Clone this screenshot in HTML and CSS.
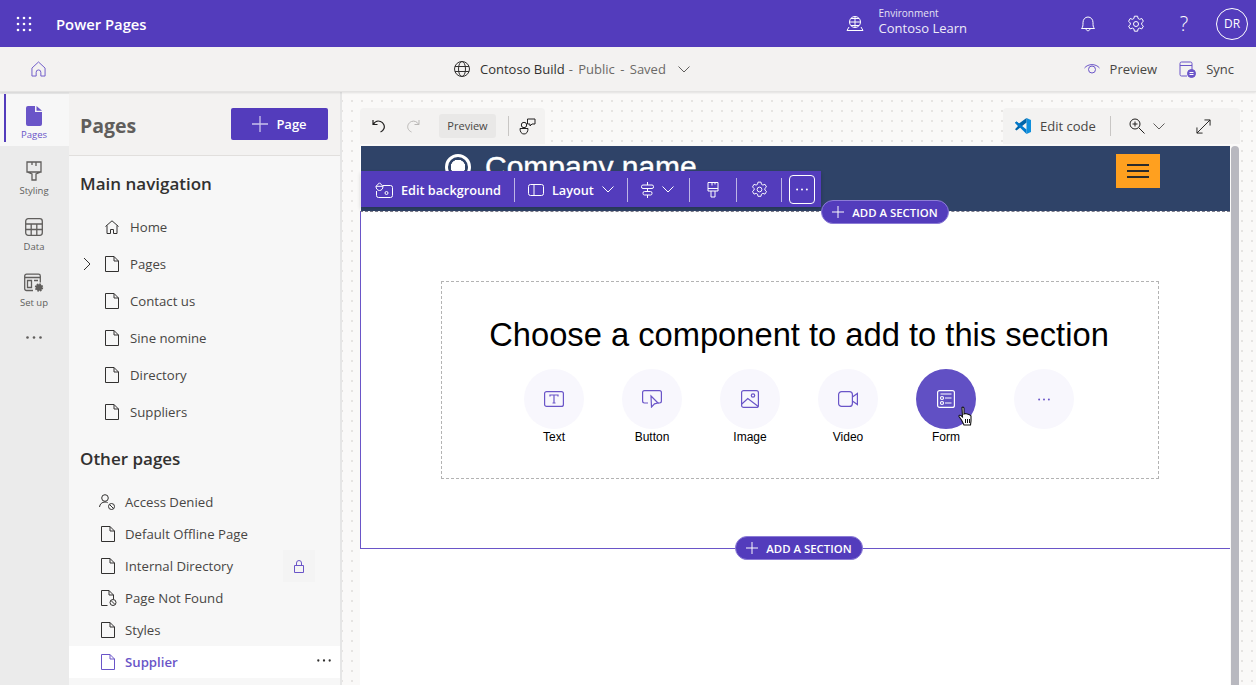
FILE: index.html
```html
<!DOCTYPE html>
<html lang="en">
<head>
    <meta charset="UTF-8">
    <title>Power Pages</title>
    <link rel="stylesheet" href="styles.css">
</head>
<body>
    <svg class="sprite" width="0" height="0">
        <symbol id="file" viewBox="0 0 14 16"><path d="M.5.5h8.500l4.500 4.500v10.500H.5zM9 .5V5h4.500" fill="none" stroke="currentColor"/></symbol>
        <symbol id="gear" viewBox="0 0 18 18"><path d="M7.400 1.200h3.200l.5 2.300 1.500.8 2.200-.8 1.600 2.800-1.700 1.500v1.800l1.700 1.500-1.600 2.800-2.200-.8-1.500.8-.5 2.300H7.400l-.5-2.300-1.500-.8-2.200.8-1.600-2.800 1.700-1.500V8L1.600 6.300l1.600-2.800 2.200.8 1.500-.8z" fill="none" stroke="currentColor"/><circle cx="9" cy="9" r="2.500" fill="none" stroke="currentColor"/></symbol>
        <symbol id="plus" viewBox="0 0 16 16"><path d="M8 0v16M0 8h16" fill="none" stroke="currentColor" stroke-width="1.300"/></symbol>
        <symbol id="chev" viewBox="0 0 12 7"><path d="M.5.5 6 6 11.500.5" fill="none" stroke="currentColor"/></symbol>
        <symbol id="dots" viewBox="0 0 16 3"><circle cx="1.500" cy="1.500" r="1.300" fill="currentColor"/><circle cx="8" cy="1.500" r="1.300" fill="currentColor"/><circle cx="14.500" cy="1.500" r="1.300" fill="currentColor"/></symbol>
    </svg>

    <header class="topbar">
        <svg class="waffle" width="16" height="16" viewBox="0 0 16 16" fill="#fff">
            <circle cx="2" cy="2" r="1.300"/><circle cx="8" cy="2" r="1.300"/><circle cx="14" cy="2" r="1.300"/>
            <circle cx="2" cy="8" r="1.300"/><circle cx="8" cy="8" r="1.300"/><circle cx="14" cy="8" r="1.300"/>
            <circle cx="2" cy="14" r="1.300"/><circle cx="8" cy="14" r="1.300"/><circle cx="14" cy="14" r="1.300"/>
        </svg>
        <span class="brand">Power Pages</span>
        <div class="env">
            <svg width="18" height="18" viewBox="0 0 18 18" fill="none" stroke="#fff">
                <circle cx="9" cy="7" r="5.500"/><path d="M3.500 7h11M9 1.500v11M5 3.500h8M5 10.500h8M3 12l-2 3.500h16L15 12"/>
            </svg>
            <div class="env-text">
                <span class="env-label">Environment</span>
                <span class="env-name">Contoso Learn</span>
            </div>
        </div>
        <div class="top-icons">
            <span class="top-slot"><svg width="16" height="18" viewBox="0 0 16 18" fill="none" stroke="#fff"><path d="M1.500 13.500c1.500-1.500 1.500-3 1.500-6 0-3 2-5.500 5-5.500s5 2.500 5 5.500c0 3 0 4.500 1.500 6zM6 13.500c0 3 4 3 4 0"/></svg></span>
            <span class="top-slot"><svg width="18" height="18"><use href="#gear"/></svg></span>
            <span class="top-slot help">?</span>
            <span class="top-slot"><span class="avatar">DR</span></span>
        </div>
    </header>

    <div class="subbar">
        <svg class="home-link" width="15" height="16" viewBox="0 0 16 17" fill="none" stroke="currentColor"><path d="M1 7.500 8 1l7 6.500V16h-4.500v-4a2.500 2.500 0 0 0-5 0v4H1z"/></svg>
        <div class="site-info">
            <svg width="16" height="16" viewBox="0 0 16 16" fill="none" stroke="#323130"><circle cx="8" cy="8" r="7.500"/><ellipse cx="8" cy="8" rx="3.500" ry="7.500"/><path d="M1 5.500h14M1 10.500h14"/></svg>
            <span class="site-name">Contoso Build</span>
            <span class="site-status">- Public - Saved</span>
            <svg class="site-chev" width="12" height="7"><use href="#chev"/></svg>
        </div>
        <div class="sub-actions">
            <span class="sub-action">
                <svg width="16" height="12" viewBox="0 0 16 12" fill="none" stroke="#6a55c8"><path d="M.5 5C4 .5 12 .5 15.500 5"/><circle cx="8" cy="6.500" r="3.500"/></svg>
                Preview
            </span>
            <span class="sub-action">
                <svg width="17" height="17" viewBox="0 0 17 17" fill="none" stroke="#6a55c8"><path d="M8 15H2.500A1.500 1.500 0 0 1 1 13.500v-11A1.500 1.500 0 0 1 2.500 1h9A1.500 1.500 0 0 1 13 2.500V9M1 4.500h12"/><circle cx="12.500" cy="12.500" r="4" fill="#6a55c8"/><path d="M10.500 11.500h4M10.500 13.500h4" stroke="#fff"/></svg>
                Sync
            </span>
        </div>
    </div>

    <div class="workspace">
        <nav class="rail">
            <a class="rail-item active">
                <svg width="16" height="20" viewBox="0 0 16 20"><path d="M2 0h7v6h7v12a2 2 0 0 1-2 2H2a2 2 0 0 1-2-2V2a2 2 0 0 1 2-2z" fill="#6a55c8"/><path d="M10.500 0 16 4.800h-5.500z" fill="#6a55c8"/></svg>
                Pages
            </a>
            <a class="rail-item">
                <svg width="16" height="20" viewBox="0 0 16 20" fill="none" stroke="#605e5c" stroke-width="1.300"><path d="M1 1h14v10H1zM6 1v3M10 1v4M1 11l5 2v6h4v-6l5-2"/></svg>
                Styling
            </a>
            <a class="rail-item">
                <svg width="18" height="18" viewBox="0 0 18 18" fill="none" stroke="#605e5c" stroke-width="1.300"><rect x=".7" y=".7" width="16.600" height="16.600" rx="2.500"/><path d="M.7 6h16.600M.7 11.500h16.600M6.200 6v11.300M11.800 6v11.300"/></svg>
                Data
            </a>
            <a class="rail-item">
                <svg width="20" height="19" viewBox="0 0 20 19" fill="none" stroke="#605e5c" stroke-width="1.300"><path d="M9 17H2.500A1.800 1.800 0 0 1 .7 15.200V2.500A1.800 1.800 0 0 1 2.500.7h12a1.800 1.800 0 0 1 1.800 1.800V9M.7 4h15.600M3.500 7h4v7h-4zM10 7h4"/><circle cx="15" cy="14" r="3.200" fill="#605e5c" stroke-width="2" stroke-dasharray="1.500 1"/></svg>
                Set up
            </a>
            <svg class="rail-more" width="18" height="3"><use href="#dots"/></svg>
        </nav>

        <aside class="panel">
            <div class="panel-head">
                <h1>Pages</h1>
                <button class="add-page"><svg width="16" height="16"><use href="#plus"/></svg>Page</button>
            </div>

            <h2>Main navigation</h2>
            <ul class="tree">
                <li>
                    <svg class="tree-icon" width="14" height="14" viewBox="0 0 14 14" fill="none" stroke="currentColor"><path d="M.5 6.500 7 .8l6.500 5.700M2 5.500v8h3.500V9.500h3v4H12v-8"/></svg>
                    Home
                </li>
                <li class="has-children">
                    <svg class="tree-chev" width="8" height="14" viewBox="0 0 8 14" fill="none" stroke="currentColor"><path d="m1 1 6 6-6 6"/></svg>
                    <svg class="tree-icon" width="14" height="16"><use href="#file"/></svg>
                    Pages
                </li>
                <li><svg class="tree-icon" width="14" height="16"><use href="#file"/></svg>Contact us</li>
                <li><svg class="tree-icon" width="14" height="16"><use href="#file"/></svg>Sine nomine</li>
                <li><svg class="tree-icon" width="14" height="16"><use href="#file"/></svg>Directory</li>
                <li><svg class="tree-icon" width="14" height="16"><use href="#file"/></svg>Suppliers</li>
            </ul>

            <h2 class="other-head">Other pages</h2>
            <ul class="tree tree-other">
                <li>
                    <svg class="tree-icon" width="16" height="16" viewBox="0 0 16 16" fill="none" stroke="currentColor"><circle cx="6" cy="4" r="3.300"/><path d="M.5 13c.3-3 2.500-5 5.500-5 1 0 2 .2 2.700.7"/><circle cx="12.500" cy="12.500" r="3"/><path d="m10.500 10.500 4 4"/></svg>
                    Access Denied
                </li>
                <li><svg class="tree-icon" width="14" height="16"><use href="#file"/></svg>Default Offline Page</li>
                <li>
                    <svg class="tree-icon" width="14" height="16"><use href="#file"/></svg>Internal Directory
                    <span class="lock">
                        <svg width="10" height="13" viewBox="0 0 10 13" fill="none" stroke="#6a55c8"><path d="M.5 5.500h9v7h-9zM2.500 5.500V3a2.500 2.500 0 0 1 5 0v2.500"/></svg>
                    </span>
                </li>
                <li>
                    <svg class="tree-icon" width="16" height="16" viewBox="0 0 16 16" fill="none" stroke="currentColor"><path d="M6.500 15.500h-6V.5H8L12.500 5v4M8 .5V5h4.500"/><circle cx="12" cy="12.500" r="3"/><path d="m10 10.500 4 4"/></svg>
                    Page Not Found
                </li>
                <li><svg class="tree-icon" width="14" height="16"><use href="#file"/></svg>Styles</li>
                <li class="selected">
                    <svg class="tree-icon" width="14" height="16"><use href="#file"/></svg>Supplier
                    <svg class="row-more" width="14" height="3"><use href="#dots"/></svg>
                </li>
            </ul>
        </aside>

        <main class="canvas">
            <div class="tools">
                <div class="toolbox toolbox-left">
                    <svg width="14" height="14" viewBox="0 0 14 14" fill="none" stroke="#201f1e" stroke-width="1.200"><path d="M1 1v4.500h4.500M1.300 5.300C3 2.500 6 1.500 8.500 2.500c3 1.200 4.500 4.500 3.500 7-.6 1.500-1.800 2.800-3.500 3.500"/></svg>
                    <svg class="redo" width="14" height="14" viewBox="0 0 14 14" fill="none" stroke="#b9b7b5"><path d="M13 1v4.500H8.500M12.700 5.300C11 2.500 8 1.500 5.500 2.500c-3 1.200-4.500 4.500-3.500 7 .6 1.500 1.800 2.800 3.500 3.500"/></svg>
                    <span class="preview-chip">Preview</span>
                    <span class="tool-sep"></span>
                    <svg class="feedback" width="17" height="17" viewBox="0 0 17 17" fill="none" stroke="#201f1e"><circle cx="5" cy="7" r="2.700"/><path d="M1 10.500h8c0 3.500-1.500 5.500-4 5.500s-4-2-4-5.500zM8.500 1h7.500v5h-3l-2 2V6H8.500z"/></svg>
                </div>
                <div class="toolbox toolbox-right">
                    <svg width="16" height="16" viewBox="0 0 16 16"><path d="M11.500 0 16 2v12l-4.500 2z" fill="#0f8fdc"/><path d="M11.500 0v4.500L4 10.500 1.500 12.500 0 11.300 3 8 0 4.700l1.500-1.200L4 5.500z" fill="#0065a9"/><path d="M11.500 16v-4.500L4 5.500 1.500 3.500 0 4.700 8 12.500z" fill="#007acc"/></svg>
                    <span class="edit-code">Edit code</span>
                    <span class="tool-sep"></span>
                    <svg class="zoom-icon" width="16" height="16" viewBox="0 0 16 16" fill="none" stroke="#201f1e"><circle cx="6" cy="6" r="5"/><path d="m10 10 5.500 5.500M6 3.500v5M3.500 6h5"/></svg>
                    <svg class="zoom-chev" width="12" height="7"><use href="#chev"/></svg>
                    <svg class="expand" width="15" height="15" viewBox="0 0 16 16" fill="none" stroke="#201f1e"><path d="M1 15 15 1M9 1h6v6M1 9v6h6"/></svg>
                </div>
            </div>

            <div class="frame">
                <div class="site-page">
                    <div class="site-header">
                        <div class="site-logo">
                            <span class="logo-mark"></span>
                            <span class="logo-name">Company name</span>
                        </div>
                        <span class="burger"><i></i><i></i><i></i></span>
                    </div>

                    <section class="section">
                        <div class="picker">
                            <h3>Choose a component to add to this section</h3>
                            <div class="choices">
                                <div class="choice">
                                    <span class="circle"><svg width="20" height="16" viewBox="0 0 20 16" fill="none" stroke="currentColor" stroke-width="1.200"><rect x=".6" y=".6" width="18.800" height="14.800" rx="2"/><path d="M6 5.500V4h8v1.500M10 4v8M8.500 12h3"/></svg></span>
                                    Text
                                </div>
                                <div class="choice">
                                    <span class="circle"><svg width="20" height="18" viewBox="0 0 20 18" fill="none" stroke="currentColor" stroke-width="1.200"><path d="M6 13H2.500A1.900 1.900 0 0 1 .6 11.100V2.500A1.900 1.900 0 0 1 2.500.6h15a1.900 1.900 0 0 1 1.900 1.900v8.600a1.900 1.900 0 0 1-1.900 1.900H16"/><path d="m9 6 7 7-3.500.8L9.500 17z"/></svg></span>
                                    Button
                                </div>
                                <div class="choice">
                                    <span class="circle"><svg width="18" height="18" viewBox="0 0 18 18" fill="none" stroke="currentColor" stroke-width="1.200"><rect x=".6" y=".6" width="16.800" height="16.800" rx="2"/><circle cx="12" cy="5.500" r="1.700"/><path d="m.8 14 6-5.500 10.500 8"/></svg></span>
                                    Image
                                </div>
                                <div class="choice">
                                    <span class="circle"><svg width="20" height="16" viewBox="0 0 20 16" fill="none" stroke="currentColor" stroke-width="1.200"><rect x=".6" y=".6" width="13.800" height="14.800" rx="3"/><path d="m14.400 6 5-3.500v11l-5-3.500"/></svg></span>
                                    Video
                                </div>
                                <div class="choice hovered">
                                    <span class="circle"><svg width="18" height="18" viewBox="0 0 18 18" fill="none" stroke="currentColor" stroke-width="1.200"><rect x=".6" y=".6" width="16.800" height="16.800" rx="2"/><path d="M3.500 4h11M8 8h6.500M8 13h6.500"/><circle cx="5" cy="8" r="1.500"/><circle cx="5" cy="13" r="1.500"/></svg></span>
                                    Form
                                    <svg class="cursor" width="16" height="20" viewBox="0 0 16 20"><path d="M4 1.500c1-.8 2-.3 2 1V8l1-.5 1.500.3 1.500.4 1.500.5 1.500 1.300v5L12.500 19H6L3.500 14 1 10.500c-.3-1.200.8-1.800 2-.8l1.500 1.300z" fill="#fff" stroke="#111" stroke-width="1.100"/><path d="M7.500 13v4M9.500 13v4M11.500 13v4" stroke="#111"/></svg>
                                </div>
                                <div class="choice">
                                    <span class="circle"><svg width="12" height="3"><use href="#dots"/></svg></span>
                                </div>
                            </div>
                        </div>
                        <button class="add-section add-bottom"><svg width="12" height="12"><use href="#plus"/></svg>ADD A SECTION</button>
                    </section>
                </div>
                <div class="scrollbar"></div>

                <div class="edit-bar">
                    <span class="edit-item">
                        <svg width="18" height="16" viewBox="0 0 18 16" fill="none" stroke="#fff"><path d="M8 3.500h7.500a2 2 0 0 1 2 2v8a2 2 0 0 1-2 2h-12a2 2 0 0 1-2-2V9"/><path d="M4.500.8 1 4.300c0 2.500 1.500 4.200 3.500 4.200S8 6.800 8 4.300zM1 4.300h7"/><circle cx="11.500" cy="11" r="1.500"/></svg>
                        Edit background
                    </span>
                    <span class="edit-sep"></span>
                    <span class="edit-item">
                        <svg width="16" height="12" viewBox="0 0 16 12" fill="none" stroke="#fff"><rect x=".5" y=".5" width="15" height="11" rx="2"/><path d="M6 .5v11"/></svg>
                        Layout
                        <svg class="edit-chev" width="12" height="7"><use href="#chev"/></svg>
                    </span>
                    <span class="edit-sep"></span>
                    <span class="edit-item edit-align">
                        <svg width="13" height="16" viewBox="0 0 13 16" fill="none" stroke="#fff"><path d="M6.500 0v3M6.500 6.500v3M6.500 13v3"/><rect x=".5" y="3" width="12" height="3.500" rx="1.500"/><rect x="2" y="9.500" width="9" height="3.500" rx="1.500"/></svg>
                        <svg class="edit-chev" width="12" height="7"><use href="#chev"/></svg>
                    </span>
                    <span class="edit-sep"></span>
                    <span class="edit-item edit-brush">
                        <svg width="12" height="16" viewBox="0 0 12 16" fill="none" stroke="#fff"><path d="M1 .5h10v8.500H1zM5 .5v3M8 .5v2M1 6.500h10M4 9v6h4V9"/></svg>
                    </span>
                    <span class="edit-sep"></span>
                    <span class="edit-item edit-gear">
                        <svg width="17" height="17"><use href="#gear"/></svg>
                    </span>
                    <span class="edit-sep"></span>
                    <span class="edit-more"><svg width="12" height="3"><use href="#dots"/></svg></span>
                </div>
                <button class="add-section add-top"><svg width="12" height="12"><use href="#plus"/></svg>ADD A SECTION</button>
            </div>
        </main>
    </div>
</body>
</html>
```

FILE: styles.css
```css
* {
    box-sizing: border-box;
}

body {
    margin: 0;
    height: 685px;
    overflow: hidden;
    font-family: "Open Sans", "Noto Sans", sans-serif;
    color: #323130;
    display: flex;
    flex-direction: column;
}

.sprite {
    position: absolute;
}

/* top purple bar */
.topbar {
    height: 47px;
    flex: none;
    background-color: #533cbc;
    color: #fff;
    display: flex;
    align-items: center;
    padding-left: 16px;
}

.brand {
    margin-left: 24px;
    font-size: 14.800px;
    font-weight: 600;
}

.env {
    margin-left: 699px;
    display: flex;
    align-items: center;
    gap: 15px;
}

.env-text {
    display: flex;
    flex-direction: column;
    margin-bottom: 3px;
}

.env-label {
    font-size: 10px;
    line-height: 12px;
    opacity: 0.85;
}

.env-name {
    font-size: 13px;
    line-height: 18px;
    opacity: 0.9;
}

.top-icons {
    margin-left: auto;
    display: flex;
    align-items: center;
}

.top-slot {
    width: 48px;
    display: flex;
    justify-content: center;
}

.help {
    font-size: 20px;
    font-weight: 300;
}

.avatar {
    width: 32px;
    height: 32px;
    border: 1px solid #fff;
    border-radius: 50%;
    font-size: 12px;
    display: flex;
    align-items: center;
    justify-content: center;
}

/* site bar */
.subbar {
    height: 45px;
    flex: none;
    background-color: #f3f2f1;
    border-bottom: 1px solid #e4e3e2;
    box-shadow: 0 1px 2px rgba(0, 0, 0, 0.1);
    position: relative;
    z-index: 2;
    display: flex;
    align-items: center;
    padding: 0 22px 0 31px;
}

.home-link {
    color: #6a55c8;
}

.site-info {
    margin-left: 408px;
    display: flex;
    align-items: center;
    font-size: 13px;
}

.site-name {
    margin-left: 10px;
}

.site-status {
    margin-left: 4px;
    color: #6b6967;
    word-spacing: 2px;
}

.site-chev {
    margin-left: 12px;
    color: #605e5c;
}

.sub-actions {
    margin-left: auto;
    display: flex;
    gap: 22px;
}

.sub-action {
    display: flex;
    align-items: center;
    gap: 10px;
    font-size: 13px;
    color: #484644;
}

/* body of the app */
.workspace {
    flex: 1;
    display: flex;
    min-height: 0;
}

.rail {
    width: 69px;
    flex: none;
    background-color: #ebebeb;
    padding-top: 2px;
    display: flex;
    flex-direction: column;
}

.rail-item {
    height: 56px;
    padding: 15px 1px 0 0;
    display: flex;
    flex-direction: column;
    align-items: center;
    gap: 3px;
    font-size: 9.500px;
    line-height: 13px;
    color: #605e5c;
}

.rail-item svg {
    height: 20px;
}

.rail-item.active {
    height: 52px;
    padding-top: 12px;
    gap: 2px;
    background-color: #f7f7f7;
    color: #6a55c8;
    position: relative;
}

.rail-item.active::before {
    content: "";
    position: absolute;
    left: 4px;
    top: 0;
    width: 2px;
    height: 48px;
    background-color: #533cbc;
}

.rail-more {
    margin: 22px 0 0 25px;
    color: #605e5c;
}

.panel {
    width: 273px;
    flex: none;
    background-color: #f7f7f7;
    border-right: 2px solid #e6e6e6;
}

.panel-head {
    height: 64px;
    background-color: #f3f2f1;
    border-bottom: 1px solid #e1dfdd;
    display: flex;
    align-items: center;
    justify-content: space-between;
    padding: 0 12px 0 11px;
}

h1 {
    margin: 4px 0 0;
    font-size: 19.500px;
    font-weight: 700;
    color: #605e5c;
}

.add-page {
    width: 97px;
    height: 32px;
    border: none;
    border-radius: 2px;
    background-color: #533cbc;
    color: #fff;
    font: 600 13px "Open Sans", sans-serif;
    display: flex;
    align-items: center;
    justify-content: center;
    gap: 8px;
}

.add-page svg {
    color: #c9c1ec;
}

h2 {
    margin: 16px 0 0 11px;
    font-size: 17px;
    line-height: 24px;
    font-weight: 600;
}

.other-head {
    margin-top: 17px;
}

.tree {
    list-style: none;
    margin: 12px 0 0;
    padding: 0;
}

.tree li {
    height: 37px;
    padding-left: 36px;
    display: flex;
    align-items: center;
    font-size: 13.200px;
    color: #484644;
    position: relative;
}

.tree-icon {
    flex: none;
    margin-right: 11px;
    color: #323130;
}

.tree-chev {
    position: absolute;
    left: 14px;
    color: #323130;
}

.tree-other {
    margin-top: 15px;
}

.tree-other li {
    height: 32px;
    padding-left: 32px;
}

.tree-other .tree-icon {
    margin-right: 10px;
}

.tree-other li:first-child .tree-icon {
    margin-left: -2px;
    margin-right: 10px;
}

.tree-other li:nth-child(4) .tree-icon {
    margin-right: 8px;
}

.lock {
    position: absolute;
    left: 214px;
    top: 0;
    width: 32px;
    height: 32px;
    background-color: #f4f4f4;
    display: flex;
    align-items: center;
    justify-content: center;
}

.tree li.selected {
    background-color: #fff;
    color: #6a55c8;
    font-weight: 600;
}

.selected .tree-icon {
    color: #6a55c8;
}

.row-more {
    position: absolute;
    right: 9px;
    top: 13px;
    color: #323130;
}

/* canvas with the page being edited */
.canvas {
    flex: 1;
    min-width: 0;
    padding: 16px 16px 0 18px;
    background-color: #faf9f8;
    background-image: radial-gradient(circle, #e6e4e2 1px, transparent 1.200px);
    background-size: 10px 10px;
    background-position: -5px 4px;
}

.tools {
    height: 36px;
    display: flex;
    justify-content: space-between;
}

.toolbox {
    height: 36px;
    background-color: #f3f2f1;
    border-radius: 4px 4px 0 0;
    display: flex;
    align-items: center;
}

.toolbox-left {
    padding: 0 9px 0 12px;
}

.redo {
    margin-left: 20px;
}

.preview-chip {
    margin-left: 19px;
    width: 57px;
    height: 24px;
    border-radius: 3px;
    background-color: #e9e8e7;
    font-size: 11px;
    line-height: 24px;
    text-align: center;
    color: #484644;
}

.tool-sep {
    width: 1px;
    height: 20px;
    background-color: #c8c6c4;
}

.toolbox-left .tool-sep {
    margin-left: 12px;
}

.feedback {
    margin-left: 10px;
}

.toolbox-right {
    width: 237px;
    padding-left: 12px;
}

.edit-code {
    margin-left: 9px;
    margin-right: 14px;
    font-size: 13px;
    color: #484644;
}

.zoom-icon {
    margin-left: 18px;
}

.zoom-chev {
    margin-left: 8px;
    color: #605e5c;
}

.expand {
    margin-left: 31px;
}

.frame {
    margin-top: 2px;
    display: flex;
    height: 539px;
    position: relative;
}

.site-page {
    width: 870px;
    background-color: #fff;
}

.site-header {
    height: 65px;
    margin-left: 1px;
    background-color: #2f4368;
    display: flex;
    justify-content: space-between;
    padding: 8px 70px 0 84px;
}

/* only the top of the logo shows above the edit bar */
.site-logo {
    display: flex;
    align-items: flex-start;
    gap: 14px;
    height: 17px;
    overflow: hidden;
}

.logo-mark {
    flex: none;
    width: 26px;
    height: 26px;
    border: 3px solid #fff;
    border-radius: 50%;
    background: radial-gradient(#fff 7px, transparent 7.500px);
}

.logo-name {
    margin-top: -4px;
    font-family: "Liberation Sans", Arial, sans-serif;
    font-size: 30px;
    color: #fff;
    -webkit-text-stroke: 0.4px #fff;
}

.burger {
    width: 44px;
    height: 34px;
    background-color: #ffa01f;
    display: flex;
    flex-direction: column;
    justify-content: center;
    align-items: center;
    gap: 4px;
}

.burger i {
    width: 22px;
    height: 2px;
    background-color: #2b2b2b;
}

.section {
    height: 338px;
    padding: 69px 71px 0 80px;
    border-top: 1px dashed #7d7d8c;
    border-left: 1px solid #6a55c8;
    border-bottom: 1px solid #6a55c8;
    position: relative;
}

.picker {
    height: 198px;
    border: 1px dashed #b3b3b3;
    padding-top: 35px;
    font-family: "Liberation Sans", Arial, sans-serif;
}

h3 {
    margin: 0 2px 0 0;
    text-align: center;
    font-size: 32.700px;
    line-height: 36px;
    font-weight: 400;
    color: #000;
}

.choices {
    margin: 16px 0 0 82px;
    display: flex;
    gap: 38px;
}

.choice {
    width: 60px;
    display: flex;
    flex-direction: column;
    align-items: center;
    gap: 1px;
    font-size: 12px;
    line-height: 14px;
    color: #000;
    position: relative;
}

.circle {
    width: 60px;
    height: 60px;
    border-radius: 50%;
    background-color: #f8f7fd;
    color: #6a55c8;
    display: flex;
    align-items: center;
    justify-content: center;
}

.hovered .circle {
    background-color: #6150c4;
    color: #fff;
}

.cursor {
    position: absolute;
    left: 42px;
    top: 37px;
}

.scrollbar {
    width: 8px;
    margin-left: 1px;
    background-color: #b8b8bf;
    border-radius: 4px 4px 0 0;
}

/* overlays on the page */
.edit-bar {
    position: absolute;
    left: 1px;
    top: 25px;
    width: 460px;
    height: 36px;
    background-color: #533cbc;
    color: #fff;
    box-shadow: 0 2px 4px rgba(0, 0, 0, 0.2);
    display: flex;
    align-items: center;
    padding: 1px 0 0 14px;
}

.edit-item {
    display: flex;
    align-items: center;
    gap: 8px;
    font-size: 12.700px;
    font-weight: 600;
}

.edit-align {
    margin-right: 2px;
}

.edit-brush {
    margin: 0 4px;
}

.edit-gear {
    margin-left: 1px;
}

.edit-sep {
    width: 1px;
    height: 24px;
    margin: 0 13px;
    background-color: #bdb5e6;
}

.edit-more {
    margin-left: -6px;
    width: 26px;
    height: 29px;
    border: 1px solid #fff;
    border-radius: 4px;
    display: flex;
    align-items: center;
    justify-content: center;
}

.add-section {
    position: absolute;
    height: 24px;
    width: 128px;
    border: 1px solid #8c7cd6;
    border-radius: 12px;
    background-color: #533cbc;
    color: #fff;
    font: 600 11.400px "Open Sans", sans-serif;
    display: flex;
    align-items: center;
    justify-content: center;
    gap: 8px;
    padding: 0;
    white-space: nowrap;
}

.add-top {
    left: 461px;
    top: 54px;
}

.add-bottom {
    left: 374px;
    bottom: -12px;
}
```
